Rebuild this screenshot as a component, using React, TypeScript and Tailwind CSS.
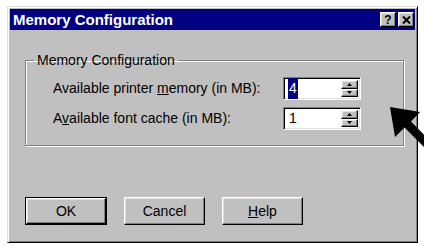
import { ReactNode } from "react";

const raised =
  "border border-t-white border-l-white border-r-black border-b-black shadow-[inset_-1px_-1px_0_#808080,inset_1px_1px_0_#dfdfdf]";
const sunken =
  "border border-t-[#808080] border-l-[#808080] border-r-white border-b-white shadow-[inset_1px_1px_0_#000,inset_-1px_-1px_0_#dfdfdf]";

function Arrow({ up }: { up?: boolean }) {
  return (
    <svg width="5" height="3" viewBox="0 0 5 3">
      <polygon points={up ? "2.5,0 5,3 0,3" : "0,0 5,0 2.5,3"} fill="#000" />
    </svg>
  );
}

function SpinBox({ value, selected }: { value: string; selected?: boolean }) {
  return (
    <div className={`flex h-[23px] w-[78px] items-stretch bg-white p-[2px] ${sunken}`}>
      <div className="flex flex-1 items-center pl-[2px]">
        <span className={selected ? "bg-[#000080] px-[1px] text-white" : "px-[1px] text-black"}>
          {value}
        </span>
      </div>
      <div className="flex w-[17px] flex-col">
        <div className={`flex flex-1 items-center justify-center bg-[#c0c0c0] ${raised}`}>
          <Arrow up />
        </div>
        <div className={`flex flex-1 items-center justify-center bg-[#c0c0c0] ${raised}`}>
          <Arrow />
        </div>
      </div>
    </div>
  );
}

function Button({ children, primary }: { children: ReactNode; primary?: boolean }) {
  return (
    <div className={primary ? "border border-black" : ""}>
      <div
        className={`flex items-center justify-center bg-[#c0c0c0] text-[14px] text-black ${raised} ${
          primary ? "h-[26px] w-[80px]" : "h-[28px] w-[81px]"
        }`}
      >
        {children}
      </div>
    </div>
  );
}

export default function App() {
  return (
    <div className="relative h-[246px] w-[424px] overflow-hidden bg-white pl-[7px] pt-[6px] font-['Liberation_Sans',Arial,sans-serif]">
      {/* Dialog window */}
      <div className="flex h-[237px] w-[411px] flex-col border border-t-[#dfdfdf] border-l-[#dfdfdf] border-r-black border-b-black bg-[#c0c0c0] p-[2px] shadow-[inset_1px_1px_0_#fff,inset_-1px_-1px_0_#808080]">
        {/* Title bar */}
        <div className="flex h-[21px] items-center justify-between bg-[#000080] pl-[3px] pr-[1px]">
          <span className="text-[15px] font-bold leading-none text-white">Memory Configuration</span>
          <div className="flex gap-[2px]">
            <div className={`flex h-[15px] w-[16px] items-center justify-center bg-[#c0c0c0] ${raised}`}>
              <span className="text-[12px] font-bold leading-none text-black">?</span>
            </div>
            <div className={`flex h-[15px] w-[16px] items-center justify-center bg-[#c0c0c0] ${raised}`}>
              <svg width="9" height="8" viewBox="0 0 9 8">
                <path d="M1 0.5 L8 7.5 M8 0.5 L1 7.5" stroke="#000" strokeWidth="2" />
              </svg>
            </div>
          </div>
        </div>

        {/* Group box */}
        <fieldset className="ml-[15px] mr-[11px] mt-[22px] h-[94px] border border-[#808080] shadow-[1px_1px_0_#fff,inset_1px_1px_0_#fff]">
          <legend className="ml-[8px] px-[3px] text-[14px] leading-[16px] text-black">
            Memory Configuration
          </legend>
          <div className="grid grid-cols-[230px_auto] items-center gap-y-[7px] pl-[27px] pt-[9px] text-[14px] text-black">
            <span>
              Available printer <u>m</u>emory (in MB):
            </span>
            <SpinBox value="4" selected />
            <span>
              A<u>v</u>ailable font cache (in MB):
            </span>
            <SpinBox value="1" />
          </div>
        </fieldset>

        {/* Buttons */}
        <div className="ml-[15px] mt-[51px] flex gap-[17px]">
          <Button primary>OK</Button>
          <Button>Cancel</Button>
          <Button>
            <span>
              <u>H</u>elp
            </span>
          </Button>
        </div>
      </div>

      {/* Pointer arrow drawn over the dialog */}
      <svg className="absolute left-0 top-0" width="424" height="246" viewBox="0 0 424 246">
        <polygon
          points="390,107 420,112 411,121.5 440,151 434,157 404.5,127.5 395,137"
          fill="#000"
        />
      </svg>
    </div>
  );
}
